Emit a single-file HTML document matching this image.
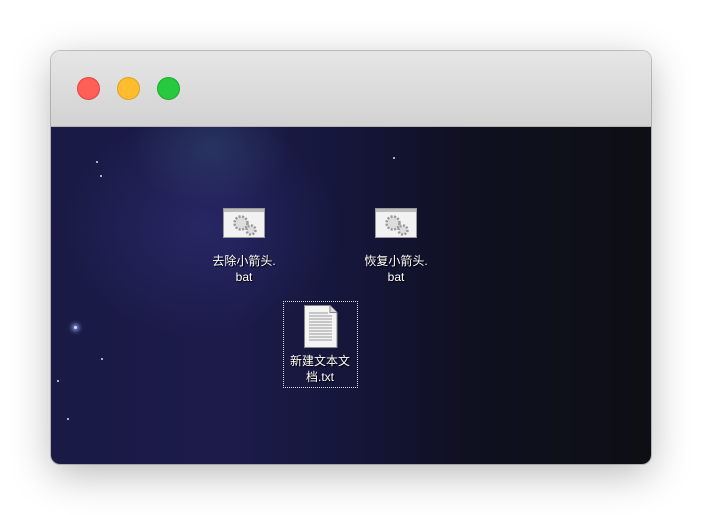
<!DOCTYPE html>
<html><head><meta charset="utf-8"><style>
body{margin:0;width:702px;height:515px;background:#fff;position:relative;overflow:hidden;font-family:"Liberation Sans","Noto Sans CJK SC",sans-serif}
.win{position:absolute;left:51px;top:51px;width:600px;height:413px;border-radius:9px;overflow:hidden;box-shadow:0 10px 40px rgba(0,0,0,.28),0 0 0 1px rgba(0,0,0,.2)}
.tb{position:absolute;left:0;top:0;width:600px;height:75px;background:linear-gradient(#e6e6e6,#d2d2d2);border-bottom:1px solid #b5b5b5}
.c{position:absolute;top:26px;width:23px;height:23px;border-radius:50%}
.bg{position:absolute;left:0;top:76px;width:600px;height:337px;background:
radial-gradient(ellipse 140px 110px at 150px 100px,rgba(60,60,150,.35),transparent),
radial-gradient(ellipse 80px 60px at 160px 20px,rgba(50,80,110,.45),transparent),
linear-gradient(90deg,#1a1a45 0%,#1c1b4a 30%,#15163a 50%,#0f1020 70%,#0d0f14 100%)}
.s{position:absolute;width:2px;height:2px;background:#dde;border-radius:50%}
.lbl{position:absolute;color:#fff;font-size:12px;line-height:16px;text-align:center;text-shadow:1px 1px 1px #000}
.bat{position:absolute;width:42px;height:30px;background:#f2f2f2;border:1px solid #999;box-sizing:border-box}
.bat:before{content:"";position:absolute;left:0;top:0;right:0;height:3px;background:#bbb}
</style></head><body>
<div class="win">
<div class="tb">
<div class="c" style="left:26px;background:#fe5f57;border:1px solid #e0443e;box-sizing:border-box"></div>
<div class="c" style="left:66px;background:#febc2e;border:1px solid #dea123;box-sizing:border-box"></div>
<div class="c" style="left:106px;background:#28c840;border:1px solid #1aab29;box-sizing:border-box"></div>
</div>
<div class="bg">
<div class="s" style="left:45px;top:34px"></div><div class="s" style="left:49px;top:48px"></div>
<div class="s" style="left:342px;top:30px"></div><div class="s" style="left:50px;top:231px"></div>
<div class="s" style="left:23px;top:199px;width:3px;height:3px;box-shadow:0 0 5px 2px #9af"></div>
<div class="s" style="left:6px;top:253px"></div><div class="s" style="left:16px;top:291px"></div>
</div>
</div>
<div class="bat" style="left:223px;top:208px"><svg width="40" height="28" style="position:absolute;left:0;top:0"><circle cx="17" cy="14" r="6.5" fill="#ddd" stroke="#999" stroke-dasharray="2 1.5" stroke-width="2.5"/><circle cx="27" cy="21" r="4.5" fill="#ddd" stroke="#999" stroke-dasharray="2 1.5" stroke-width="2.5"/></svg></div>
<div class="bat" style="left:375px;top:208px"><svg width="40" height="28" style="position:absolute;left:0;top:0"><circle cx="17" cy="14" r="6.5" fill="#ddd" stroke="#999" stroke-dasharray="2 1.5" stroke-width="2.5"/><circle cx="27" cy="21" r="4.5" fill="#ddd" stroke="#999" stroke-dasharray="2 1.5" stroke-width="2.5"/></svg></div>
<div class="lbl" style="left:194px;top:253px;width:100px">去除小箭头.<br>bat</div>
<div class="lbl" style="left:346px;top:253px;width:100px">恢复小箭头.<br>bat</div>
<div style="position:absolute;left:283px;top:301px;width:73px;height:85px;border:1px dotted #ddd"></div>
<svg style="position:absolute;left:304px;top:305px" width="34" height="43"><path d="M.5 .5H26L33 7.5V42.5H.5Z" fill="#f4f4f4" stroke="#888"/><path d="M26 .5V7.5H33" fill="#ddd" stroke="#888"/><g stroke="#999"><path d="M5 8H24M5 11H28M5 14H28M5 17H28M5 20H28M5 23H28M5 26H28M5 29H28M5 32H28M5 35H28"/></g></svg>
<div class="lbl" style="left:280px;top:353px;width:80px">新建文本文<br>档.txt</div>
</body></html>
